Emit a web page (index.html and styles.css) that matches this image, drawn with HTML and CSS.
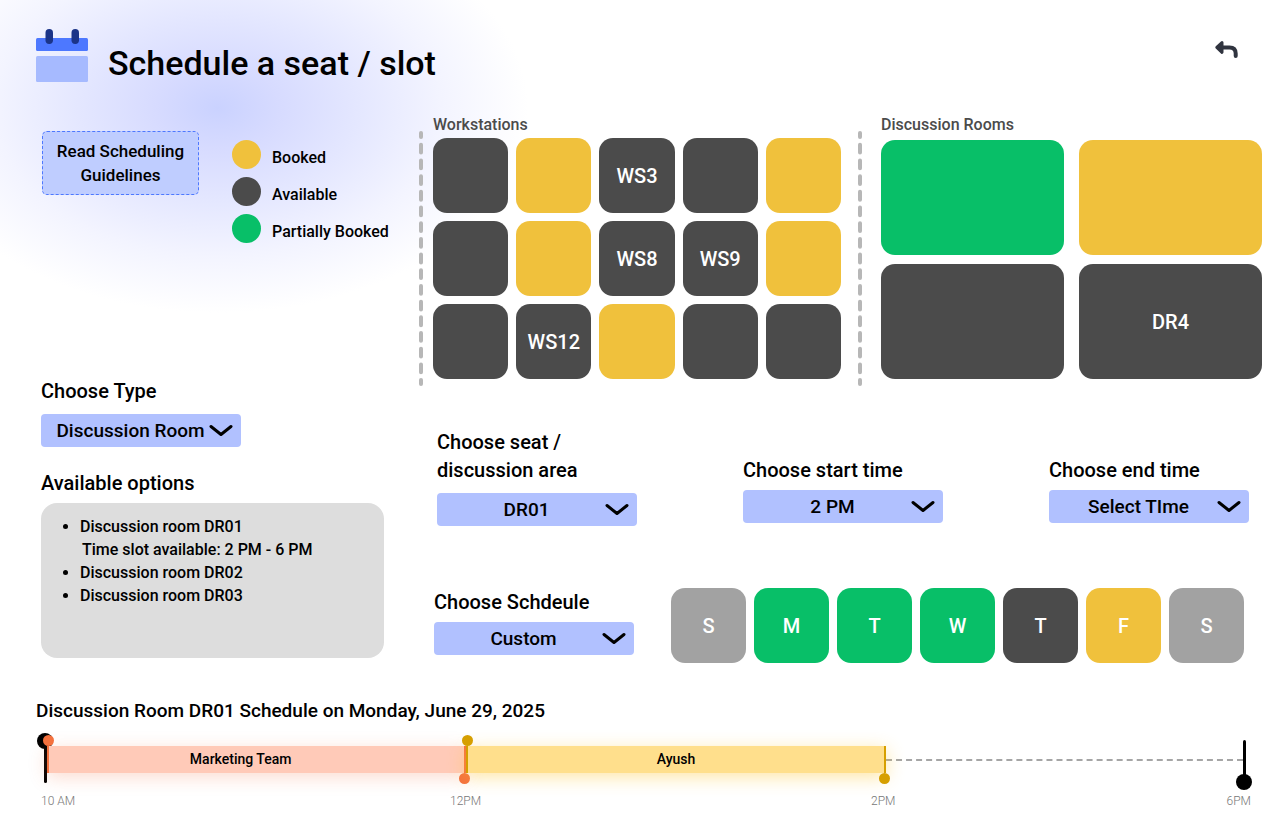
FILE: index.html
```html
<!DOCTYPE html>
<html lang="en">
<head>
<meta charset="utf-8">
<meta name="viewport" content="width=device-width, initial-scale=1">
<title>Schedule a seat / slot</title>
<link rel="stylesheet" href="styles.css">
</head>
<body>
<header class="header">
  <svg class="logo" width="52" height="54" viewBox="0 0 52 54" aria-hidden="true">
    <rect x="0" y="10" width="52" height="13" rx="1.500" fill="#4d78ff"/>
    <rect x="0" y="28" width="52" height="26" rx="1.500" fill="#a6baff"/>
    <rect x="9.500" y="1" width="7.500" height="15" rx="3.700" fill="#1b3488"/>
    <rect x="35.500" y="1" width="7.500" height="15" rx="3.700" fill="#1b3488"/>
  </svg>
  <h1 class="title">Schedule a seat / slot</h1>
  <button class="back" type="button" aria-label="Go back">
    <svg width="24" height="18" viewBox="0 0 24 18" aria-hidden="true">
      <path d="M8 2.500 L2.800 7.400 L8 12.300 Z" fill="#30343f" stroke="#30343f" stroke-width="3" stroke-linejoin="round"/>
      <path d="M6 7.400 H15.500 Q21.700 7.400 21.700 13.500 V16" fill="none" stroke="#30343f" stroke-width="4" stroke-linecap="round"/>
    </svg>
  </button>
</header>

<div class="layout">
  <aside class="sidebar">
    <div class="intro">
      <button class="guidelines" type="button">Read Scheduling Guidelines</button>
      <ul class="legend">
        <li><span class="dot booked"></span>Booked</li>
        <li><span class="dot available"></span>Available</li>
        <li><span class="dot partial"></span>Partially Booked</li>
      </ul>
    </div>
    <div class="field type-field">
      <label class="label" for="type">Choose Type</label>
      <div class="picker">
        <select id="type"><option>Discussion Room</option><option>Workstation</option></select>
        <svg class="chevron" width="24" height="14" viewBox="0 0 24 14" aria-hidden="true"><path d="M2 2.500 L12 10.500 L22 2.500"/></svg>
      </div>
    </div>
    <h2 class="label">Available options</h2>
    <ul class="options">
      <li>Discussion room DR01<div class="slot">Time slot available: 2 PM - 6 PM</div></li>
      <li>Discussion room DR02</li>
      <li>Discussion room DR03</li>
    </ul>
  </aside>

  <main class="main">
    <div class="maps">
      <svg class="divider" width="4" height="255" viewBox="0 0 4 255" aria-hidden="true"><path d="M2 2 V253" pathLength="256"/></svg>
      <section class="workstations">
        <h2 class="map-title">Workstations</h2>
        <div class="desks">
          <button type="button" class="tile available" aria-label="WS1"></button>
          <button type="button" class="tile booked" aria-label="WS2"></button>
          <button type="button" class="tile available">WS3</button>
          <button type="button" class="tile available" aria-label="WS4"></button>
          <button type="button" class="tile booked" aria-label="WS5"></button>
          <button type="button" class="tile available" aria-label="WS6"></button>
          <button type="button" class="tile booked" aria-label="WS7"></button>
          <button type="button" class="tile available">WS8</button>
          <button type="button" class="tile available">WS9</button>
          <button type="button" class="tile booked" aria-label="WS10"></button>
          <button type="button" class="tile available" aria-label="WS11"></button>
          <button type="button" class="tile available">WS12</button>
          <button type="button" class="tile booked" aria-label="WS13"></button>
          <button type="button" class="tile available" aria-label="WS14"></button>
          <button type="button" class="tile available" aria-label="WS15"></button>
        </div>
      </section>
      <svg class="divider" width="4" height="255" viewBox="0 0 4 255" aria-hidden="true"><path d="M2 2 V253" pathLength="256"/></svg>
      <section class="discussion">
        <h2 class="map-title">Discussion Rooms</h2>
        <div class="rooms">
          <button type="button" class="tile partial" aria-label="DR1"></button>
          <button type="button" class="tile booked" aria-label="DR2"></button>
          <button type="button" class="tile available" aria-label="DR3"></button>
          <button type="button" class="tile available">DR4</button>
        </div>
      </section>
    </div>

    <div class="fields">
      <div class="field area-field">
        <label class="label" for="area">Choose seat /<br>discussion area</label>
        <div class="picker">
          <select id="area"><option>DR01</option><option>DR02</option><option>DR03</option></select>
          <svg class="chevron" width="24" height="14" viewBox="0 0 24 14" aria-hidden="true"><path d="M2 2.500 L12 10.500 L22 2.500"/></svg>
        </div>
      </div>
      <div class="field time-field">
        <label class="label" for="start">Choose start time</label>
        <div class="picker">
          <select id="start"><option>2 PM</option><option>3 PM</option></select>
          <svg class="chevron" width="24" height="14" viewBox="0 0 24 14" aria-hidden="true"><path d="M2 2.500 L12 10.500 L22 2.500"/></svg>
        </div>
      </div>
      <div class="field time-field">
        <label class="label" for="end">Choose end time</label>
        <div class="picker">
          <select id="end"><option>Select TIme</option><option>6 PM</option></select>
          <svg class="chevron" width="24" height="14" viewBox="0 0 24 14" aria-hidden="true"><path d="M2 2.500 L12 10.500 L22 2.500"/></svg>
        </div>
      </div>
    </div>

    <div class="schedule">
      <div class="field">
        <label class="label" for="repeat">Choose Schdeule</label>
        <div class="picker">
          <select id="repeat"><option>Custom</option><option>Weekly</option></select>
          <svg class="chevron" width="24" height="14" viewBox="0 0 24 14" aria-hidden="true"><path d="M2 2.500 L12 10.500 L22 2.500"/></svg>
        </div>
      </div>
      <div class="days">
        <button type="button" class="tile closed">S</button>
        <button type="button" class="tile partial">M</button>
        <button type="button" class="tile partial">T</button>
        <button type="button" class="tile partial">W</button>
        <button type="button" class="tile available">T</button>
        <button type="button" class="tile booked">F</button>
        <button type="button" class="tile closed">S</button>
      </div>
    </div>
  </main>
</div>

<section class="timeline">
  <h2 class="timeline-title">Discussion Room DR01 Schedule on Monday, June 29, 2025</h2>
  <div class="track">
    <div class="pin pin-start"></div>
    <div class="booking marketing">Marketing Team</div>
    <div class="booking ayush">Ayush</div>
    <div class="free"></div>
    <div class="pin pin-end"></div>
  </div>
  <div class="hours">
    <span>10 AM</span>
    <span>12PM</span>
    <div class="late-hours"><span>2PM</span><span>6PM</span></div>
  </div>
</section>
</body>
</html>
```

FILE: styles.css
```css
* {
  box-sizing: border-box;
}

body {
  margin: 0;
  font-family: Roboto, "Liberation Sans", sans-serif;
  font-weight: 500;
  color: #000;
  background: #fff radial-gradient(ellipse 310px 205px at 218px 108px,
    #cad2ff 0%, #d7dbff 20%, #e4e7ff 45%, #f3f4ff 72%, #fff 100%) no-repeat;
}

h1, h2, ul {
  margin: 0;
  padding: 0;
  font-weight: 500;
}

button, select {
  font: inherit;
  color: inherit;
  border: 0;
  padding: 0;
  margin: 0;
  cursor: pointer;
}

.header {
  display: flex;
  align-items: flex-end;
  gap: 20px;
  padding: 28px 38px 0 36px;
}

.title {
  flex: 1;
  font-size: 34px;
  line-height: 38px;
}

.back {
  align-self: flex-start;
  padding: 12px 4px;
  background: none;
}

.back svg {
  display: block;
}

.layout {
  display: grid;
  grid-template-columns: minmax(0, 383fr) minmax(0, 843fr);
  margin-top: 33px;
  padding: 0 18px 0 36px;
}

.sidebar {
  padding: 16px 28px 0 5px;
}

.intro {
  display: flex;
  align-items: flex-start;
  gap: 33px;
  padding-left: 1px;
}

.guidelines {
  flex: none;
  width: 157px;
  padding: 7px 8px;
  border: 1px dashed #4d78ff;
  border-radius: 5px;
  background: #bfcdff;
  font-size: 17px;
  line-height: 24px;
}

.legend {
  display: grid;
  gap: 8px;
  padding-top: 9px;
  list-style: none;
  font-size: 16px;
  line-height: 36px;
  white-space: nowrap;
}

.legend li {
  display: flex;
  gap: 11px;
  height: 29px;
}

.dot {
  flex: none;
  width: 29px;
  height: 29px;
  border-radius: 50%;
}

.booked { background: #f0c13c; }
.available { background: #4b4b4b; }
.partial { background: #08bf68; }
.closed { background: #a2a2a2; }

.label {
  display: block;
  font-size: 20px;
  line-height: 28px;
}

.field {
  display: grid;
  gap: 6px;
}

.type-field {
  gap: 9px;
  margin: 134px 0 22px;
}

.picker {
  display: grid;
  align-items: center;
  width: 200px;
  border-radius: 4px;
  background: #b1c1ff;
}

.picker select,
.picker .chevron {
  grid-area: 1 / 1;
}

.picker select {
  appearance: none;
  width: 100%;
  height: 33px;
  padding: 0 32px 0 11px;
  background: transparent;
  font-size: 19px;
  text-align: center;
  text-align-last: center;
}

.chevron {
  justify-self: end;
  margin-right: 8px;
  pointer-events: none;
  fill: none;
  stroke: #000;
  stroke-width: 3;
  stroke-linecap: round;
  stroke-linejoin: round;
}

.options {
  min-height: 155px;
  margin: 6px 7px 0 0;
  padding: 12px 16px 12px 39px;
  border-radius: 16px;
  background: #ddd;
  font-size: 16px;
  line-height: 23px;
}

.slot {
  padding-left: 2px;
}

.maps {
  display: grid;
  grid-template-columns: 4px minmax(0, 415fr) 4px minmax(0, 390fr);
  column-gap: 10px;
}

.divider {
  margin-top: 16px;
  fill: none;
  stroke: #b7b7b7;
  stroke-width: 4;
  stroke-linecap: round;
  stroke-dasharray: 8 8;
  stroke-dashoffset: 4;
}

.workstations {
  padding-right: 7px;
}

.discussion {
  padding-left: 9px;
}

.map-title {
  font-size: 16px;
  line-height: 19px;
  color: #4b4b4b;
}

.tile {
  min-height: 75px;
  border-radius: 14px;
  color: #fff;
  font-size: 20px;
}

.desks {
  display: grid;
  grid-template-columns: repeat(5, minmax(0, 1fr));
  gap: 8px;
  margin-top: 4px;
}

.rooms {
  display: grid;
  grid-template-columns: repeat(2, minmax(0, 1fr));
  gap: 9px 15px;
  margin-top: 6px;
}

.rooms .tile {
  min-height: 115px;
}

.fields {
  display: flex;
  justify-content: space-between;
  align-items: flex-end;
  margin-top: 42px;
  padding: 0 13px 0 18px;
}

.area-field {
  gap: 9px;
}

.time-field {
  margin-bottom: 3px;
}

.schedule {
  display: flex;
  align-items: flex-start;
  gap: 37px;
  margin-top: 62px;
  padding: 0 18px 0 15px;
}

.days {
  flex: 1;
  display: grid;
  grid-template-columns: repeat(7, minmax(0, 1fr));
  gap: 8px;
}

.timeline {
  margin-top: 34px;
}

.timeline-title {
  padding-left: 36px;
  font-size: 19px;
  line-height: 28px;
}

.track {
  display: grid;
  grid-template-columns: 3px minmax(0, 419fr) minmax(0, 419fr) minmax(0, 357fr) 3px;
  align-items: start;
  margin-top: 15px;
  padding: 0 34px 0 44px;
}

.pin {
  position: relative;
  z-index: 1;
  height: 43px;
  border-radius: 2px;
  background: #000;
}

.pin::after {
  content: "";
  position: absolute;
  left: -7px;
  width: 16px;
  height: 16px;
  border-radius: 50%;
  background: #000;
}

.pin-start::after {
  top: -7px;
}

.pin-end::after {
  bottom: -7px;
}

.booking {
  position: relative;
  z-index: 2;
  margin-top: 6px;
  padding-right: 32px;
  border: solid;
  border-width: 0 2px;
  font-size: 14px;
  line-height: 27px;
  text-align: center;
}

.booking::before,
.booking::after {
  content: "";
  position: absolute;
  width: 11px;
  height: 11px;
  border-radius: 50%;
}

.booking::before {
  left: -6px;
  top: -11px;
}

.booking::after {
  right: -6px;
  bottom: -11px;
}

.marketing {
  border-color: #f4713e;
  background: #ffcab8;
  box-shadow: 0 4px 18px rgba(244, 113, 62, 0.25);
}

.marketing::before,
.marketing::after {
  background: #f4713e;
}

.ayush {
  border-color: #d69f00;
  background: #ffdf8c;
  box-shadow: 0 4px 18px rgba(255, 200, 50, 0.45);
}

.ayush::before,
.ayush::after {
  background: #d69f00;
}

.ayush {
  padding-right: 0;
}

.free {
  margin-top: 19px;
  border-top: 2px dashed #a5a5a5;
}

.hours {
  display: grid;
  grid-template-columns: 409fr 421fr 380fr;
  margin-top: 8px;
  padding: 0 29px 0 41px;
  font-size: 12px;
  line-height: 20px;
  font-weight: 300;
  color: #777;
}

.late-hours {
  display: flex;
  justify-content: space-between;
}
```
